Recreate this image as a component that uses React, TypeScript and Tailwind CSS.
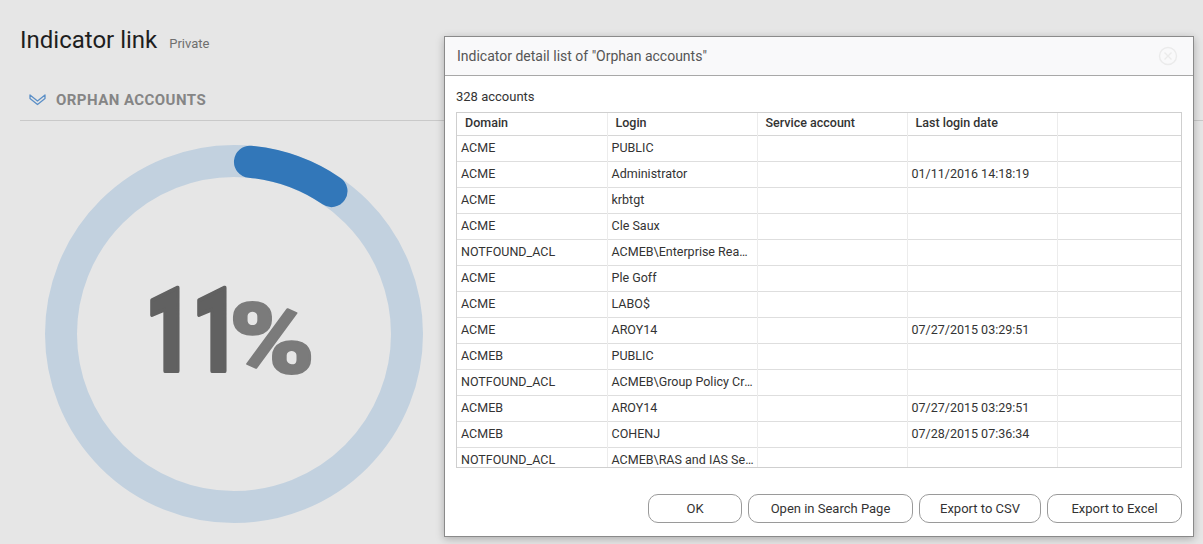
import React from "react";

const rows = [
  { domain: "ACME", login: "PUBLIC", service: "", last: "" },
  { domain: "ACME", login: "Administrator", service: "", last: "01/11/2016 14:18:19" },
  { domain: "ACME", login: "krbtgt", service: "", last: "" },
  { domain: "ACME", login: "Cle Saux", service: "", last: "" },
  { domain: "NOTFOUND_ACL", login: "ACMEB\\Enterprise Read-only Domain Controllers", service: "", last: "" },
  { domain: "ACME", login: "Ple Goff", service: "", last: "" },
  { domain: "ACME", login: "LABO$", service: "", last: "" },
  { domain: "ACME", login: "AROY14", service: "", last: "07/27/2015 03:29:51" },
  { domain: "ACMEB", login: "PUBLIC", service: "", last: "" },
  { domain: "NOTFOUND_ACL", login: "ACMEB\\Group Policy Creator Owners", service: "", last: "" },
  { domain: "ACMEB", login: "AROY14", service: "", last: "07/27/2015 03:29:51" },
  { domain: "ACMEB", login: "COHENJ", service: "", last: "07/28/2015 07:36:34" },
  { domain: "NOTFOUND_ACL", login: "ACMEB\\RAS and IAS Servers", service: "", last: "" },
  { domain: "ACME", login: "Guest", service: "", last: "" },
];

const buttons = [
  { label: "OK", w: "w-[94px]" },
  { label: "Open in Search Page", w: "w-[165px]" },
  { label: "Export to CSV", w: "w-[122px]" },
  { label: "Export to Excel", w: "w-[135px]" },
];

// donut gauge, the arc (caps included) covers `percent` of the circle
function Gauge({ percent }: { percent: number }) {
  const r = 173;
  const sw = 32;
  const c = 2 * Math.PI * r;
  const arc = Math.max((c * percent) / 100 - sw, 0);
  return (
    <svg width="378" height="378" viewBox="0 0 378 378">
      <circle cx="189" cy="189" r={r} fill="none" stroke="#c2d1df" strokeWidth={sw} />
      <circle
        cx="189"
        cy="189"
        r={r}
        fill="none"
        stroke="#3277b9"
        strokeWidth={sw}
        strokeLinecap="round"
        strokeDasharray={`${arc} ${c}`}
        strokeDashoffset={-sw / 2}
        transform="rotate(-90 189 189)"
      />
      {/* squeezed so it reads like the condensed face */}
      <g style={{ fontFamily: "Roboto, 'Liberation Sans', sans-serif", fontWeight: 900 }} strokeLinejoin="round">
        <text
          x="100"
          y="226"
          fontSize="116"
          fill="#616161"
          stroke="#616161"
          strokeWidth="4"
          textLength="94"
          lengthAdjust="spacingAndGlyphs"
        >
          11
        </text>
        <text
          x="184"
          y="228"
          fontSize="98"
          fill="#7b7b7b"
          stroke="#7b7b7b"
          strokeWidth="2"
          textLength="86"
          lengthAdjust="spacingAndGlyphs"
        >
          %
        </text>
      </g>
    </svg>
  );
}

export default function App() {
  return (
    <div
      className="relative w-[1203px] h-[544px] overflow-hidden bg-[#e6e6e6]"
      style={{ fontFamily: "Roboto, 'Liberation Sans', sans-serif" }}
    >
      {/* left indicator panel */}
      <div className="pl-5 pt-[24px]">
        <div className="flex items-baseline gap-3">
          <h1 className="text-[24px] leading-[32px] text-[#1e1e1e]">Indicator link</h1>
          <span className="text-[13px] text-[#6f6f6f]">Private</span>
        </div>
        <div className="mt-[24px] flex items-center gap-[10px] pl-[9px] h-[40px]">
          <svg width="17" height="12" viewBox="0 0 17 12" fill="none" stroke="#5b8fc7" strokeWidth="1.3" strokeLinejoin="round">
            <path d="M1 1 L8.5 7 L16 1 L16 4.5 L8.5 10.5 L1 4.5 Z" />
          </svg>
          <span className="text-[15px] font-bold text-[#858585] tracking-[0.45px]">ORPHAN ACCOUNTS</span>
        </div>
        <div className="h-px bg-[#c9c9c9]" />
        <div className="ml-[25px] mt-[24px] w-[378px] h-[378px]">
          <Gauge percent={11} />
        </div>
      </div>

      {/* modal dialog */}
      <div className="absolute left-[444px] top-[36px] w-[750px] h-[501px] bg-white border border-[#8a8a8a] shadow-[0_2px_8px_rgba(0,0,0,0.25)] flex flex-col">
        <div className="h-[39px] bg-[#f9f9fa] border-b border-[#a8a8a8] flex items-center justify-between px-[12px]">
          <span className="text-[14px] text-[#555]">Indicator detail list of "Orphan accounts"</span>
          <svg width="20" height="20" viewBox="0 0 20 20" fill="none" stroke="#ebebeb" strokeWidth="1.4" className="mr-[3px]">
            <circle cx="10" cy="10" r="8.5" />
            <path d="M6.5 6.5 L13.5 13.5 M13.5 6.5 L6.5 13.5" />
          </svg>
        </div>
        <div className="px-[11px] pt-[13px] flex-1 flex flex-col">
          <div className="text-[13px] text-[#333] leading-[16px]">328 accounts</div>
          <div className="mt-[7px] h-[356px] border border-[#cfcfcf] overflow-hidden">
            <table className="w-full table-fixed border-collapse text-[12.5px] text-[#333]">
              <colgroup>
                <col className="w-[150px]" />
                <col className="w-[150px]" />
                <col className="w-[150px]" />
                <col className="w-[150px]" />
                <col />
              </colgroup>
              <thead>
                <tr className="h-[22px] border-b border-[#d6d6d6]">
                  {["Domain", "Login", "Service account", "Last login date", ""].map((h, i) => (
                    <th
                      key={i}
                      className={`text-left font-medium text-[12.5px] pl-[8px] ${i < 4 ? "border-r border-[#ececec]" : ""}`}
                    >
                      {h}
                    </th>
                  ))}
                </tr>
              </thead>
              <tbody>
                {rows.map((row, idx) => (
                  <tr key={row.domain + "-" + idx} className="h-[26px] border-b border-[#dedede]">
                    <td className="pl-[4px] pr-[2px] border-r border-[#ececec] truncate">{row.domain}</td>
                    <td className="pl-[4px] pr-[2px] border-r border-[#ececec] truncate">{row.login}</td>
                    <td className="pl-[4px] pr-[2px] border-r border-[#ececec] truncate">{row.service}</td>
                    <td className="pl-[4px] pr-[2px] border-r border-[#ececec] truncate">{row.last}</td>
                    <td />
                  </tr>
                ))}
              </tbody>
            </table>
          </div>
          <div className="mt-[26px] flex justify-end gap-[6px]">
            {buttons.map((b) => (
              <button
                key={b.label}
                className={`${b.w} h-[29px] rounded-[10px] border border-[#9a9a9a] bg-white text-[13px] text-[#333]`}
              >
                {b.label}
              </button>
            ))}
          </div>
        </div>
      </div>
    </div>
  );
}
